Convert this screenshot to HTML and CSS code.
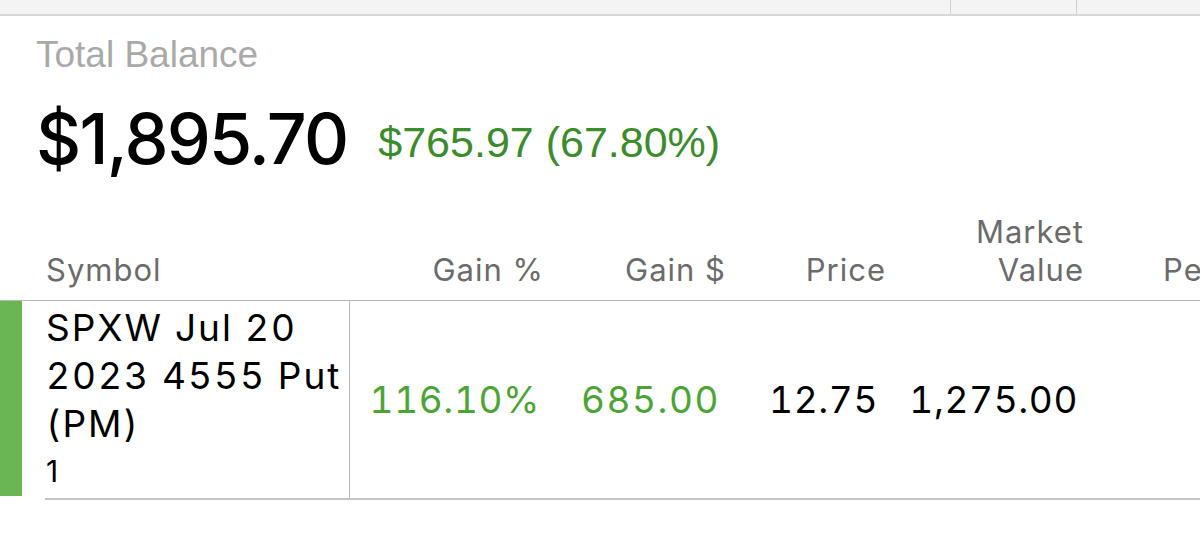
FILE: index.html
```html
<!DOCTYPE html>
<html>
<head>
<meta charset="utf-8">
<link rel="stylesheet" href="styles.css">
</head>
<body>
<div class="topbar">
  <div class="tb-fill"></div>
  <div class="tb-cell tb-a"></div>
  <div class="tb-cell tb-b"></div>
</div>
<div class="summary">
  <div class="label">Total Balance</div>
  <div class="balance-row">
    <div class="balance">$1,895.70</div>
    <div class="change">$765.97 (67.80%)</div>
  </div>
</div>
<div class="table">
  <div class="thead">
    <div class="th c-sym">Symbol</div>
    <div class="th c-gp">Gain %</div>
    <div class="th c-gd">Gain $</div>
    <div class="th c-pr">Price</div>
    <div class="th c-mv">Market<br>Value</div>
    <div class="th c-pe">Pe</div>
  </div>
  <div class="trow">
    <div class="bar"></div>
    <div class="cells">
      <div class="td-sym">
        <div class="sym-name">SPXW Jul 20<br>2023 4555 Put<br>(PM)</div>
        <div class="sym-qty">1</div>
      </div>
      <div class="td v-gp pos">116.10%</div>
      <div class="td v-gd pos">685.00</div>
      <div class="td v-pr">12.75</div>
      <div class="td v-mv">1,275.00</div>
    </div>
  </div>
</div>
</body>
</html>
```
FILE: styles.css
```css
html, body {
  margin: 0;
  padding: 0;
  background: #ffffff;
  overflow: hidden;
}
body {
  width: 1200px;
  height: 539px;
  font-family: Inter, "Liberation Sans", sans-serif;
  color: #000;
}
.topbar {
  display: flex;
  height: 14px;
  background: #f4f4f4;
  border-bottom: 2px solid #d8d8d8;
}
.tb-fill { flex: 0 0 950px; }
.tb-cell {
  border-left: 1px solid #cfcfcf;
}
.tb-a { flex: 0 0 125px; }
.tb-b { flex: 1; }

.summary {
  padding-left: 36px;
}
.label {
  margin-top: 19px;
  font-family: "Liberation Sans", Arial, sans-serif;
  font-size: 37px;
  line-height: 40px;
  color: #a9a9a9;
}
.balance-row {
  display: flex;
  align-items: flex-start;
  margin-top: 24px;
}
.balance {
  font-family: Inter, "Liberation Sans", sans-serif;
  font-size: 70px;
  font-weight: 500;
  line-height: 80px;
  letter-spacing: -1.8px;
}
.change {
  margin-left: 31px;
  margin-top: 18px;
  font-family: "Liberation Sans", Arial, sans-serif;
  font-size: 43px;
  line-height: 50px;
  color: #3b8c2b;
}

.thead {
  display: flex;
  align-items: flex-end;
  box-sizing: border-box;
  height: 122px;
  border-bottom: 1px solid #b8b8b8;
  padding-bottom: 11px;
  font-size: 31px;
  line-height: 38px;
  letter-spacing: 1px;
  color: #6b6b6b;
  white-space: nowrap;
}
.th { text-align: right; }
.c-sym { flex: 0 0 308px; padding-left: 46px; text-align: left; }
.c-gp { flex: 0 0 190px; }
.c-gd { flex: 0 0 182px; }
.c-pr { flex: 0 0 160px; }
.c-mv { flex: 0 0 198px; }
.c-pe { flex: 1; text-align: left; padding-left: 79px; }

.trow {
  display: flex;
  align-items: flex-start;
}
.bar {
  flex: 0 0 22px;
  height: 195px;
  background: #6ab655;
}
.cells {
  flex: 1;
  display: flex;
  align-items: center;
  margin-left: 23px;
  border-bottom: 2px solid #c4c4c4;
  font-variant-numeric: tabular-nums;
}
.td-sym {
  flex: 0 0 305px;
  box-sizing: border-box;
  padding: 3px 0 7px 1px;
  border-right: 1px solid #b8b8b8;
  align-self: stretch;
}
.sym-name {
  font-size: 37px;
  line-height: 48px;
  letter-spacing: 2px;
  white-space: nowrap;
}
.sym-qty {
  margin-top: 3px;
  font-size: 30px;
  line-height: 40px;
  font-variant-numeric: normal;
}
.td {
  text-align: right;
  font-size: 37px;
  line-height: 44px;
  letter-spacing: 0.6px;
  white-space: nowrap;
}
.v-gp { flex: 0 0 190px; }
.v-gd { flex: 0 0 180px; letter-spacing: 1.5px; }
.v-pr { flex: 0 0 158px; }
.v-mv { flex: 0 0 200px; }
.pos { color: #4aa535; }
```
